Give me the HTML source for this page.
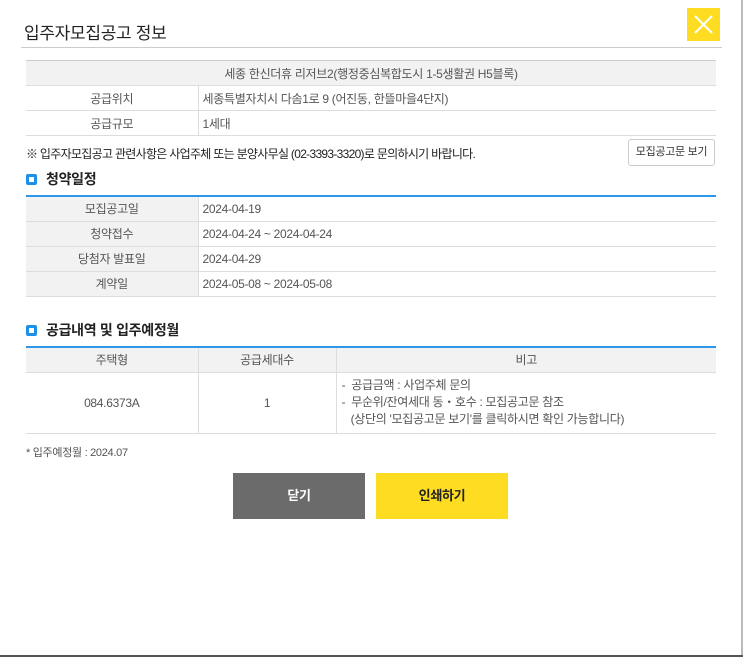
<!DOCTYPE html>
<html><head><meta charset="utf-8"><style>
*{margin:0;padding:0;box-sizing:border-box}
body{width:743px;height:657px;background:#fff;font-family:"Liberation Sans","Noto Sans CJK KR",sans-serif;color:#333;position:relative;overflow:hidden;font-size:12px;letter-spacing:-0.3px}
.abs{position:absolute}
table{border-collapse:collapse;position:absolute;left:26px;width:690px;font-size:12px}
td,th{border-bottom:1px solid #ddd;height:25px;padding:0 4px;font-weight:normal;color:#555}
.c{text-align:center}
.l{border-left:1px solid #ddd}
h2{position:absolute;left:26px;font-size:14px;font-weight:bold;color:#222;display:flex;align-items:center}
h2 span.sq{width:11px;height:11px;border:3px solid #1e90e8;border-radius:2px;margin-right:9px;display:inline-block}
</style></head><body>
<div class="abs" style="left:24px;top:19px;font-size:17px;color:#222">입주자모집공고 정보</div>
<div class="abs" style="left:687px;top:8px;width:33px;height:33px;background:#fddc22"><svg width="33" height="33"><path d="M8 8L25 25M25 8L8 25" stroke="#fff" stroke-width="2"/></svg></div>
<div class="abs" style="left:21px;top:47px;width:701px;height:1px;background:#ccc"></div>
<table style="top:60px;border-top:1px solid #ccc">
<tr><td colspan="2" class="c" style="background:#f2f2f2;height:25px">세종 한신더휴 리저브2(행정중심복합도시 1-5생활권 H5블록)</td></tr>
<tr><td class="c" style="width:172px">공급위치</td><td class="l" style="padding-left:4px">세종특별자치시 다솜1로 9 (어진동, 한뜰마을4단지)</td></tr>
<tr><td class="c">공급규모</td><td class="l">1세대</td></tr>
</table>
<div class="abs" style="left:26px;top:145px;font-size:12px;color:#222;letter-spacing:-0.7px">※ 입주자모집공고 관련사항은 사업주체 또는 분양사무실 (02-3393-3320)로 문의하시기 바랍니다.</div>
<div class="abs" style="left:628px;top:139px;width:87px;height:27px;border:1px solid #ccc;border-radius:3px;font-size:11px;text-align:center;line-height:25px">모집공고문 보기</div>
<h2 style="top:169px"><span class="sq"></span>청약일정</h2>
<table style="top:195px;border-top:2px solid #2f97e8">
<tr><td class="c" style="width:172px;background:#f2f2f2">모집공고일</td><td class="l">2024-04-19</td></tr>
<tr><td class="c" style="background:#f2f2f2">청약접수</td><td class="l">2024-04-24 ~ 2024-04-24</td></tr>
<tr><td class="c" style="background:#f2f2f2">당첨자 발표일</td><td class="l">2024-04-29</td></tr>
<tr><td class="c" style="background:#f2f2f2">계약일</td><td class="l">2024-05-08 ~ 2024-05-08</td></tr>
</table>
<h2 style="top:320px"><span class="sq"></span>공급내역 및 입주예정월</h2>
<table style="top:346px;border-top:2px solid #2f97e8">
<tr style="background:#f2f2f2"><td class="c" style="width:172px">주택형</td><td class="c l" style="width:138px">공급세대수</td><td class="c l">비고</td></tr>
<tr><td class="c" style="height:61px">084.6373A</td><td class="c l">1</td><td class="l" style="line-height:17px;padding-left:5px">-&nbsp; 공급금액 : 사업주체 문의<br>-&nbsp; 무순위/잔여세대 동・호수 : 모집공고문 참조<br>&nbsp;&nbsp;&nbsp;(상단의 '모집공고문 보기'를 클릭하시면 확인 가능합니다)</td></tr>
</table>
<div class="abs" style="left:26px;top:444px;font-size:11px;color:#555">* 입주예정월 : 2024.07</div>
<div class="abs" style="left:233px;top:473px;width:132px;height:46px;background:#6b6b6b;color:#fff;font-weight:bold;font-size:13px;text-align:center;line-height:46px">닫기</div>
<div class="abs" style="left:376px;top:473px;width:132px;height:46px;background:#fddc22;color:#222;font-weight:bold;font-size:13px;text-align:center;line-height:46px">인쇄하기</div>
<div class="abs" style="left:741px;top:0;width:2px;height:657px;background:#bbb"></div>
<div class="abs" style="left:0;top:655px;width:743px;height:2px;background:#555"></div>
</body></html>
